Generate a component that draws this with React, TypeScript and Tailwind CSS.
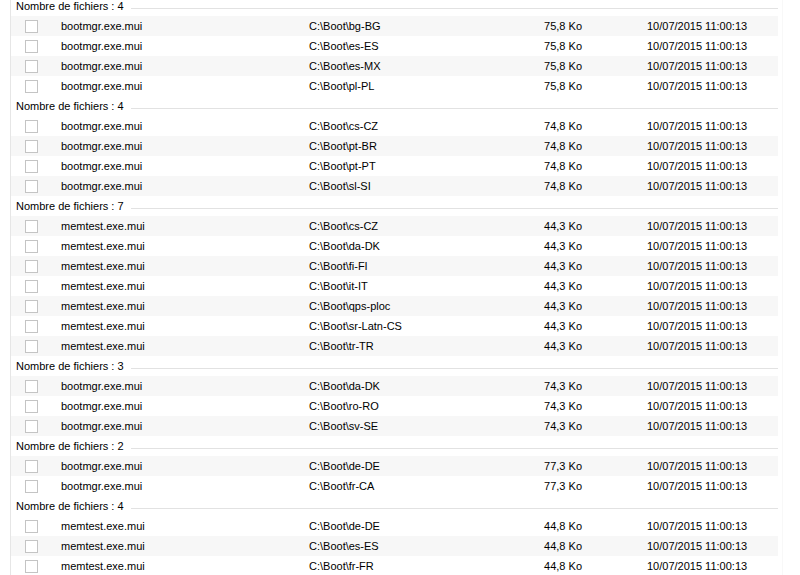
import React from "react";

type Row = { name: string; path: string; size: string };
type Group = { count: number; rows: Row[] };

const mk = (name: string, size: string, locs: string[]): Row[] =>
  locs.map((l) => ({ name, path: "C:\\Boot\\" + l, size }));

const groups: Group[] = [
  { count: 4, rows: mk("bootmgr.exe.mui", "75,8 Ko", ["bg-BG", "es-ES", "es-MX", "pl-PL"]) },
  { count: 4, rows: mk("bootmgr.exe.mui", "74,8 Ko", ["cs-CZ", "pt-BR", "pt-PT", "sl-SI"]) },
  {
    count: 7,
    rows: mk("memtest.exe.mui", "44,3 Ko", ["cs-CZ", "da-DK", "fi-FI", "it-IT", "qps-ploc", "sr-Latn-CS", "tr-TR"]),
  },
  { count: 3, rows: mk("bootmgr.exe.mui", "74,3 Ko", ["da-DK", "ro-RO", "sv-SE"]) },
  { count: 2, rows: mk("bootmgr.exe.mui", "77,3 Ko", ["de-DE", "fr-CA"]) },
  { count: 4, rows: mk("memtest.exe.mui", "44,8 Ko", ["de-DE", "es-ES", "fr-FR", "fr-FR"]) },
];

export default function App() {
  const items: React.ReactNode[] = [];
  let idx = 0;
  groups.forEach((g, gi) => {
    items.push(
      <div key={"h" + gi} className="flex h-5 items-center pl-[5px]">
        <span className="whitespace-nowrap">Nombre de fichiers : {g.count}</span>
        <div className="ml-[7px] mt-[4px] h-px flex-1 bg-[#e2e2e2]" />
      </div>
    );
    idx++;
    g.rows.forEach((r, ri) => {
      const odd = idx % 2 === 1;
      items.push(
        <div
          key={"r" + gi + "-" + ri}
          className={
            "flex h-5 items-center whitespace-nowrap pt-px " + (odd ? "bg-[#f7f7f7]" : "bg-white")
          }
        >
          <div className="ml-[14px] h-[13px] w-[13px] border border-[#c4c4c4] bg-white" />
          <div className="ml-[23px] w-[248px]">{r.name}</div>
          <div className="w-[200px]">{r.path}</div>
          <div className="w-[73px] text-right">{r.size}</div>
          <div className="ml-[65px]">10/07/2015 11:00:13</div>
        </div>
      );
      idx++;
    });
  });

  return (
    <div
      className="relative h-[575px] w-[800px] overflow-hidden bg-white text-[11px] text-black"
      style={{ fontFamily: '"Liberation Sans", Arial, sans-serif' }}
    >
      <div className="-mt-[4px] ml-[10px] w-[768px] border-l border-[#e6e6e6]">
        {items}
      </div>
      <div className="absolute left-[782px] top-0 h-[575px] w-px bg-[#f8f8f8]" />
    </div>
  );
}
